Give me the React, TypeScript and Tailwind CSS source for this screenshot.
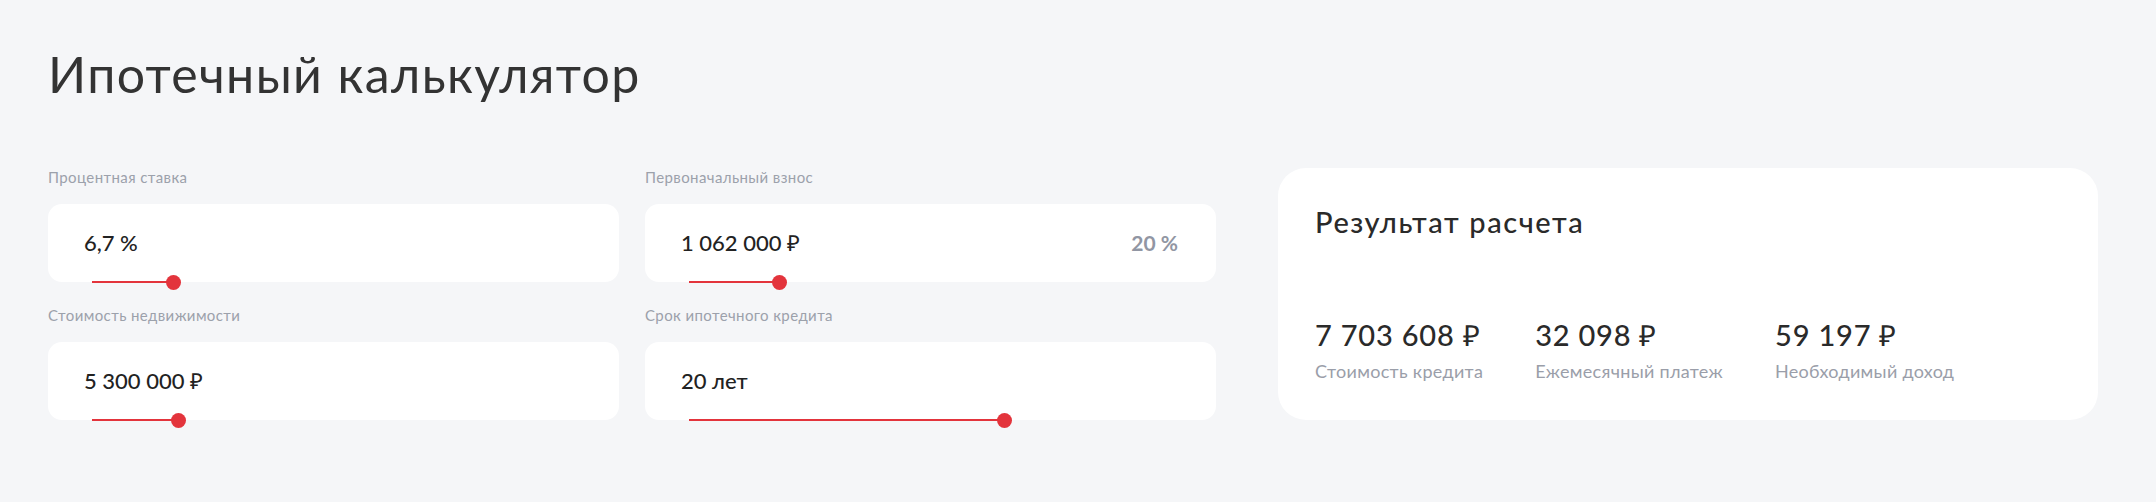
import React from 'react';

interface Field {
  label: string;
  value: string;
  extra?: string;
  fill: number; // px along the track
}

const fields: Field[] = [
  { label: 'Процентная ставка', value: '6,7 %', fill: 81 },
  { label: 'Первоначальный взнос', value: '1 062 000 ₽', extra: '20 %', fill: 90 },
  { label: 'Стоимость недвижимости', value: '5 300 000 ₽', fill: 86 },
  { label: 'Срок ипотечного кредита', value: '20 лет', fill: 315 },
];

const results = [
  { value: '7 703 608 ₽', label: 'Стоимость кредита' },
  { value: '32 098 ₽', label: 'Ежемесячный платеж' },
  { value: '59 197 ₽', label: 'Необходимый доход' },
];

const SliderField = ({ field }: { field: Field }) => (
  <div className="flex flex-col">
    <div className="text-[15px] leading-[18px] tracking-[0.4px] text-[#9ca1ab] mb-[18px]">{field.label}</div>
    <div className="relative h-[78px] bg-white rounded-[14px] flex items-center justify-between pl-[36px] pr-[38px]">
      <span className="text-[22px] leading-[1.2] font-medium text-[#222222]">{field.value}</span>
      {field.extra && (
        <span className="text-[21px] leading-[1.2] font-bold text-[#9196a3]">{field.extra}</span>
      )}
      {/* range track */}
      <div className="absolute left-[44px] bottom-0 w-[483px] h-0">
        <div className="absolute left-0 top-[-1px] h-[2px] bg-[#e3343c]" style={{ width: field.fill }} />
        <div
          className="absolute top-[-7px] w-[15px] h-[15px] rounded-full bg-[#e3343c]"
          style={{ left: field.fill - 7 }}
        />
      </div>
    </div>
  </div>
);

export default function App() {
  return (
    <div className="min-h-screen bg-[#f5f6f8] pl-[48px] pt-[49px] font-['Lato','Open_Sans',sans-serif]">
      <h1 className="text-[50px] leading-none tracking-[1.4px] font-normal text-[#333333]">Ипотечный калькулятор</h1>

      <div className="flex mt-[69px] gap-[62px]">
        <div className="grid grid-cols-[571px_571px] gap-x-[26px] gap-y-[24px]">
          {fields.map((f) => (
            <SliderField key={f.label} field={f} />
          ))}
        </div>

        <div className="w-[820px] bg-white rounded-[28px] flex flex-col justify-between pt-[37px] pb-[37px] px-[37px]">
          <h2 className="text-[29px] leading-[1.2] tracking-[1.6px] font-medium text-[#2a2a2a]">Результат расчета</h2>
          <div className="flex gap-[52px]">
            {results.map((r) => (
              <div key={r.label} className="flex flex-col gap-[9px]">
                <span className="text-[29px] leading-[1.2] tracking-[0.8px] font-medium text-[#2a2a2a]">{r.value}</span>
                <span className="text-[18px] leading-[1.2] tracking-[0.3px] text-[#9a9ea9]">{r.label}</span>
              </div>
            ))}
          </div>
        </div>
      </div>
    </div>
  );
}
